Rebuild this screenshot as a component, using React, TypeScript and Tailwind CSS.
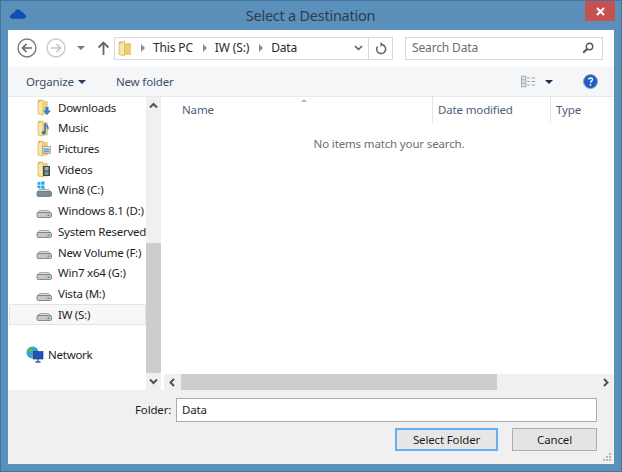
import { type ReactNode } from 'react';

function Cloud() {
  return (
    <svg width="16" height="10" viewBox="0 0 17 10">
      <path d="M2.500 10C.8 10 0 8.800 0 7.700c0-1.200.9-2.100 2-2.200C2.300 4.100 3.400 3.500 4.600 3.800 5.300 1 6.900 0 8.300 0c1.700 0 3 1.100 3.400 2.600 1.900-.2 3 .9 3.200 2.300 1.200.2 2.100 1.100 2.100 2.300 0 1.600-1 2.800-2.300 2.800z" fill="#0f4fb4" />
    </svg>
  );
}

function CloseGlyph() {
  return (
    <svg width="9" height="9" viewBox="0 0 9 9">
      <path d="M1 1l7 7M8 1L1 8" stroke="#fff" strokeWidth="2" />
    </svg>
  );
}

function NavCircle({ dim, dir }: { dim?: boolean; dir: 'left' | 'right' }) {
  const stroke = dim ? '#c9c9c9' : '#7c7c7c';
  const arrow = dim ? '#c4c4c4' : '#6a6a6a';
  return (
    <svg width="20" height="20" viewBox="0 0 20 20" className="shrink-0">
      <circle cx="10" cy="10" r="9" fill="#fff" stroke={stroke} strokeWidth="1.400" />
      {dir === 'left' ? (
        <path d="M15 10H6M9.500 6L5.500 10l4 4" fill="none" stroke={arrow} strokeWidth="1.700" />
      ) : (
        <path d="M5 10h9M10.500 6l4 4-4 4" fill="none" stroke={arrow} strokeWidth="1.700" />
      )}
    </svg>
  );
}

function FolderBase({ children }: { children?: ReactNode }) {
  return (
    <svg width="15" height="17" viewBox="0 0 15 17" className="shrink-0">
      <path d="M2 .8h3.500v1.500H11.500v13H2z" fill="#d9b95e" />
      <path d="M2 3 7 .8v15.400L2 14.500z" fill="#f7e6a4" stroke="#c9a650" strokeWidth=".6" />
      <path d="M7 2.800h4.500v12.500H7z" fill="#ecce72" />
      {children}
    </svg>
  );
}

function NavIcon({ kind }: { kind: string }) {
  if (kind === 'downloads')
    return (
      <FolderBase>
        <path d="M9.500 8h3v3.500H15L11 16l-4-4.500h2.500z" fill="#2f7fd6" />
      </FolderBase>
    );
  if (kind === 'music')
    return (
      <FolderBase>
        <path d="M9.500 3.500v9.200a1.800 1.500 0 1 1-1-1.300V3.500zM9.500 4c2.500 1.500 3.500 3 2.500 6" fill="#2f6fc4" stroke="#2f6fc4" strokeWidth=".5" />
      </FolderBase>
    );
  if (kind === 'pictures')
    return (
      <FolderBase>
        <rect x="6.500" y="6.500" width="8" height="7" fill="#f4f4f4" stroke="#8e8e8e" strokeWidth=".7" />
        <rect x="7.500" y="8" width="6" height="2.500" fill="#7fb3df" />
        <rect x="7.500" y="10.500" width="6" height="2" fill="#7d9b8e" />
      </FolderBase>
    );
  if (kind === 'videos')
    return (
      <FolderBase>
        <rect x="7" y="5" width="7" height="10" fill="#3a4650" />
        <rect x="8.500" y="6" width="4" height="3.500" fill="#8fb3c9" />
        <rect x="8.500" y="10.500" width="4" height="3.500" fill="#7f9a7a" />
      </FolderBase>
    );
  if (kind === 'network')
    return (
      <svg width="18" height="18" viewBox="0 0 18 18" className="shrink-0">
        <circle cx="6.500" cy="6.500" r="6" fill="#36a0dc" />
        <path d="M3 2.500c2-1 4 0 4.500 1.500S5 6.500 3.500 6 1.500 3.500 3 2.500zM6 8.500c1.500 0 2 1.500 1.500 3l-1.500 1C5 11.500 4.500 9 6 8.500z" fill="#5dbb4c" />
        <rect x="7.500" y="5.500" width="9.500" height="7.500" fill="#2452b8" stroke="#17347f" strokeWidth=".6" />
        <path d="M12 13v2.500M9.500 16h5" stroke="#4a5a78" strokeWidth="1.400" />
      </svg>
    );
  return (
    <svg width="16" height="18" viewBox="0 0 16 18" className="shrink-0 overflow-visible">
      {kind === 'win' && <path d="M1.500 1.200 4.500.8v3H1.500zM5.200.7 8.500.2v3.600H5.200zM1.500 4.400h3v3l-3-.4zM5.200 4.400h3.300V8L5.200 7.500z" fill="#23a9ec" />}
      <path d="M1.500 10.500 3.500 8.500h9l2 2z" fill="#dcdcdc" stroke="#8c8c8c" strokeWidth=".7" />
      <rect x="1" y="10.500" width="14.500" height="5" rx="1.200" fill={kind === 'win' ? '#7f8c95' : '#c4c7c9'} stroke="#6f7375" strokeWidth=".8" />
      <rect x="11.500" y="12.500" width="2" height="1.500" fill="#3fb04a" />
    </svg>
  );
}

const navItems = [
  { label: 'Downloads', kind: 'downloads' },
  { label: 'Music', kind: 'music' },
  { label: 'Pictures', kind: 'pictures' },
  { label: 'Videos', kind: 'videos' },
  { label: 'Win8 (C:)', kind: 'win' },
  { label: 'Windows 8.1 (D:)', kind: 'drive' },
  { label: 'System Reserved', kind: 'drive' },
  { label: 'New Volume (F:)', kind: 'drive' },
  { label: 'Win7 x64 (G:)', kind: 'drive' },
  { label: 'Vista (M:)', kind: 'drive' },
  { label: 'IW (S:)', kind: 'drive', selected: true },
];

function Chevron({ d }: { d: string }) {
  return (
    <svg width="9" height="9" viewBox="0 0 9 9">
      <path d={d} fill="none" stroke="#505050" strokeWidth="2" />
    </svg>
  );
}

function Crumb({ children }: { children: ReactNode }) {
  return (
    <>
      <span className="ml-[10px] mr-[8px] h-0 w-0 border-y-[4px] border-l-[4px] border-y-transparent border-l-[#8a8a8a]" />
      <span>{children}</span>
    </>
  );
}

export default function App() {
  return (
    <div className="flex h-[472px] w-[622px] flex-col overflow-hidden border border-[#44749a] bg-[#5b90bb] px-[7px] pb-[7px] font-['Noto_Sans',sans-serif] text-[11.5px] tracking-[-0.15px] text-[#1e1e1e]">
      {/* title bar */}
      <div className="grid h-[29px] shrink-0 grid-cols-[1fr_auto_1fr]">
        <div className="flex items-start pl-[2px] pt-[8px]">
          <Cloud />
        </div>
        <div className="mr-[1px] pt-[3px] text-[14.5px] leading-[22px] tracking-[-0.25px] text-[#2b3c4e]">Select a Destination</div>
        <div className="flex items-start justify-end">
          <div className="mr-[-1px] flex h-[20px] w-[30px] items-center justify-center bg-[#c75050]">
            <CloseGlyph />
          </div>
        </div>
      </div>

      <div className="flex min-h-0 flex-1 flex-col bg-white">
        {/* nav row */}
        <div className="flex h-[37px] shrink-0 items-center pb-[1px] pl-[9px] pr-[12px]">
          <NavCircle dir="left" />
          <div className="ml-[9px] flex">
            <NavCircle dim dir="right" />
          </div>
          <span className="ml-[11px] h-0 w-0 border-x-[4px] border-t-[4px] border-x-transparent border-t-[#7a7a7a]" />
          <svg width="13" height="14" viewBox="0 0 13 14" className="ml-[12px] shrink-0">
            <path d="M6.500 14V2M1.500 6.500l5-5 5 5" fill="none" stroke="#666" strokeWidth="1.800" />
          </svg>
          <div className="ml-[4px] flex h-[23px] w-[279px] shrink-0 items-center border border-[#d9d9d9] pl-[3px]">
            <svg width="14" height="17" viewBox="0 0 14 17" className="shrink-0">
              <path d="M1 1.500h3.500V3H11v12H1z" fill="#d9b95e" />
              <path d="M1 3.500 6.500 1v15L1 14.500z" fill="#f7e6a4" stroke="#c9a650" strokeWidth=".6" />
              <path d="M6.500 3H13v12H6.500z" fill="#ecce72" />
            </svg>
            <div className="-ml-px flex items-center text-[12px] text-[#2a2a2a]">
              <Crumb>This PC</Crumb>
              <Crumb>IW (S:)</Crumb>
              <Crumb>Data</Crumb>
            </div>
            <div className="ml-auto flex h-full items-center">
              <svg width="9" height="6" viewBox="0 0 9 6" className="mr-[5px]">
                <path d="M1 1l3.500 3.500L8 1" fill="none" stroke="#555" strokeWidth="1.500" />
              </svg>
              <div className="flex h-full w-[24px] items-center justify-center border-l border-[#d9d9d9]">
                <svg width="12" height="13" viewBox="0 0 12 13">
                  <path d="M7.500 2.800A4.500 4.500 0 1 1 2.500 4.500" fill="none" stroke="#666" strokeWidth="1.500" />
                  <path d="M5.500 0v5l3-2.500z" fill="#666" />
                </svg>
              </div>
            </div>
          </div>
          <div className="ml-[12px] flex h-[23px] w-[198px] shrink-0 items-center justify-between border border-[#d9d9d9] pl-[6px] pr-[8px] text-[12px] text-[#6d6d6d]">
            <span>Search Data</span>
            <svg width="12" height="12" viewBox="0 0 12 12">
              <circle cx="7.500" cy="4.500" r="3.200" fill="none" stroke="#555" strokeWidth="1.400" />
              <path d="M5 7 1.200 10.800" stroke="#555" strokeWidth="2" />
            </svg>
          </div>
        </div>

        {/* command bar */}
        <div className="flex h-[30px] shrink-0 items-center border-b border-[#e8e9ea] bg-[#f5f6f7] pl-[18px] pr-[16px] text-[#3c4f6b]">
          <span>Organize</span>
          <span className="ml-[4px] h-0 w-0 border-x-[4px] border-t-[4px] border-x-transparent border-t-[#2d3f5c]" />
          <span className="ml-[30px]">New folder</span>
          <svg width="15" height="13" viewBox="0 0 17 13" className="ml-auto">
            <rect x=".5" y=".5" width="5" height="12" fill="#dfe4ea" stroke="#9aa6b4" />
            <path d="M1 4.500h4M1 8.500h4" stroke="#9aa6b4" />
            <path d="M7 2.500h3M12 2.500h4M7 6.500h3M12 6.500h4M7 10.500h3M12 10.500h4" stroke="#8f98a3" />
          </svg>
          <span className="ml-[9px] h-0 w-0 border-x-[4px] border-t-[4px] border-x-transparent border-t-[#1f2f4a]" />
          <svg width="15" height="15" viewBox="0 0 15 15" className="ml-[30px]">
            <circle cx="7.500" cy="7.500" r="7" fill="#1c5fc4" stroke="#9aa3ad" />
            <path d="M5.500 5.500c.5-2 4-2 4 0 0 1.500-2 1.500-2 3.200" fill="none" stroke="#fff" strokeWidth="1.500" />
            <rect x="6.700" y="10" width="1.600" height="1.600" fill="#fff" />
          </svg>
        </div>

        {/* panes */}
        <div className="flex min-h-0 flex-1">
          <div className="w-[138px] shrink-0 overflow-hidden tracking-[-0.25px]">
            {navItems.map((item) => (
              <div
                key={item.label}
                className={`flex h-[20.7px] items-center whitespace-nowrap pl-[28px] ${item.selected ? 'ml-px border border-[#e5e5e5] bg-[#f7f7f7]' : ''}`}
              >
                <span className={`flex w-[22px] shrink-0 ${item.selected ? '-ml-[2px]' : ''}`}>
                  <NavIcon kind={item.kind} />
                </span>
                <span>{item.label}</span>
              </div>
            ))}
            <div className="mt-[20px] flex h-[20px] items-center pl-[18px]">
              <span className="flex w-[22px] shrink-0">
                <NavIcon kind="network" />
              </span>
              <span>Network</span>
            </div>
          </div>

          {/* nav scrollbar */}
          <div className="flex w-[15px] shrink-0 flex-col bg-[#f0f0f0]">
            <div className="flex h-[17px] items-center justify-center">
              <Chevron d="M1 6.500l3.500-3.500 3.500 3.500" />
            </div>
            <div className="mt-[129px] flex-1 bg-[#cdcdcd]" />
            <div className="flex h-[17px] items-center justify-center">
              <Chevron d="M1 2.500l3.500 3.500 3.500-3.500" />
            </div>
          </div>

          {/* file pane */}
          <div className="ml-[3px] flex min-w-0 flex-1 flex-col">
            <div className="relative flex h-[26px] shrink-0 items-center text-[#4c607a]">
              <span className="absolute left-[137px] top-[2px] h-0 w-0 border-x-[3px] border-b-[3px] border-x-transparent border-b-[#9db8d4]" />
              <span className="w-[268px] pl-[18px]">Name</span>
              <span className="flex h-full w-[118px] items-center border-l border-[#e5e5e5] pl-[5px]">Date modified</span>
              <span className="flex h-full items-center border-l border-[#e5e5e5] pl-[5px]">Type</span>
            </div>
            <div className="flex-1 pt-[12px] text-center text-[#6d6d6d]">No items match your search.</div>
            <div className="flex h-[16px] shrink-0 items-center bg-[#f0f0f0]">
              <div className="flex h-full w-[17px] items-center justify-center">
                <Chevron d="M6 1 2.500 4.500 6 8" />
              </div>
              <div className="h-full w-[316px] bg-[#cdcdcd]" />
              <div className="ml-auto flex h-full w-[17px] items-center justify-center">
                <Chevron d="M3 1l3.500 3.500L3 8" />
              </div>
            </div>
          </div>
        </div>

        {/* footer */}
        <div className="relative h-[74px] shrink-0 bg-[#f0f0f0] pr-[17px]">
          <div className="flex h-[38px] items-center pt-[2px]">
            <span className="ml-[127px] w-[41px] text-[#1e1e1e]">Folder:</span>
            <div className="flex h-[24px] flex-1 items-center border border-[#ababab] bg-white pl-[5px]">Data</div>
          </div>
          <div className="flex justify-end">
            <button className="flex h-[23px] w-[103px] items-center justify-center border-2 border-[#66b0f2] bg-[#e6e6e6] text-[#1e1e1e]">Select Folder</button>
            <button className="ml-[14px] flex h-[23px] w-[85px] items-center justify-center border border-[#adadad] bg-[#e4e4e4] text-[#1e1e1e]">Cancel</button>
          </div>
          <svg width="10" height="10" viewBox="0 0 10 10" className="absolute bottom-[2px] right-[2px]">
            <path d="M7 1h2v2H7zM4 4h2v2H4zM7 4h2v2H7zM1 7h2v2H1zM4 7h2v2H4zM7 7h2v2H7z" fill="#b5b5b5" />
          </svg>
        </div>
      </div>
    </div>
  );
}
